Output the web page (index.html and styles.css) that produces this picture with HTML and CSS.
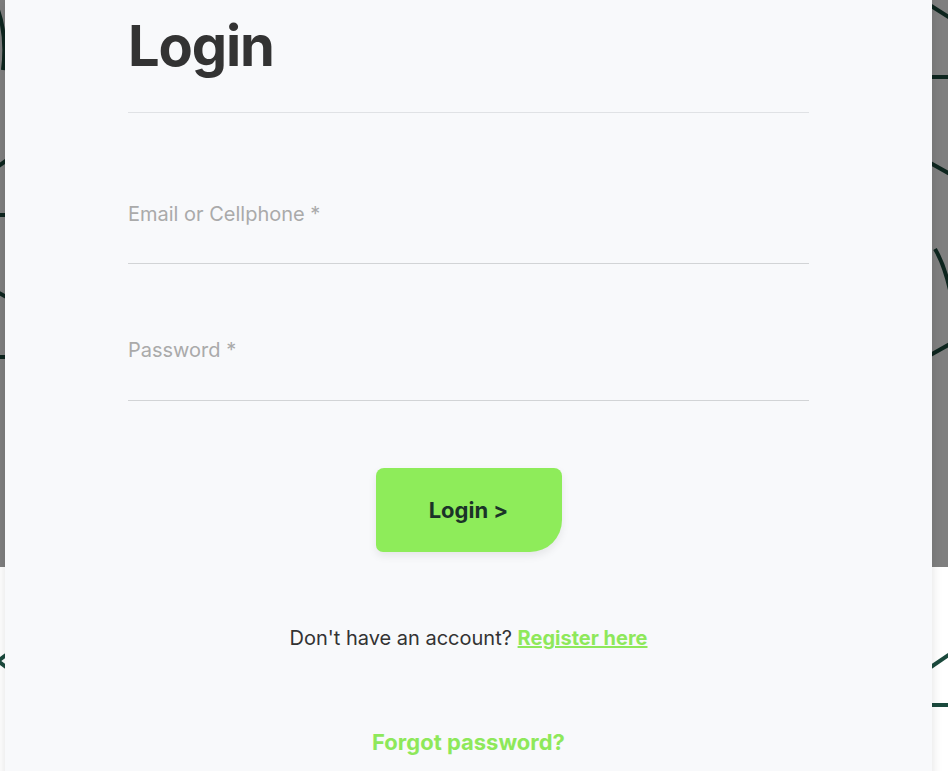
FILE: index.html
```html
<!DOCTYPE html>
<html lang="en">
<head>
    <meta charset="UTF-8">
    <meta name="viewport" content="width=device-width, initial-scale=1.0">
    <title>Login</title>
    <link rel="stylesheet" href="styles.css">
</head>
<body>
    <!-- decorative pattern behind the modal -->
    <svg class="pattern" width="948" height="771" viewBox="0 0 948 771" fill="none">
        <g stroke="#1b4a3d" stroke-width="4" stroke-linecap="butt">
            <path d="M-6 0 Q 8 30 3 70"/>
            <path d="M-10 172 L 10 158"/>
            <path d="M-10 215 L 10 215"/>
            <path d="M-10 288 L 10 299"/>
            <path d="M-10 357 L 10 357"/>
            <path d="M10 652 L -2 661 L 10 670"/>
            <path d="M925 2 L 950 18"/>
            <path d="M925 77 L 950 77"/>
            <path d="M925 160 L 950 174"/>
            <path d="M935 249 Q 944 264 950 290"/>
            <path d="M925 358 L 950 344"/>
            <path d="M925 671 L 950 654"/>
            <path d="M925 705 L 950 705"/>
        </g>
    </svg>
    <div class="overlay"></div>

    <div class="modal">
        <h1 class="title">Login</h1>

        <form class="login-form">
            <div class="field field-login">
                <label for="login">Email or Cellphone *</label>
                <input type="text" id="login" name="login">
            </div>
            <div class="field field-password">
                <label for="password">Password *</label>
                <input type="password" id="password" name="password">
            </div>
            <button type="submit" class="btn-login">Login &gt;</button>
        </form>

        <p class="register">Don't have an account? <a href="/register">Register here</a></p>
        <p class="forgot"><a href="/forgot">Forgot password?</a></p>
    </div>
</body>
</html>
```

FILE: styles.css
```css
* {
    margin: 0;
    padding: 0;
    box-sizing: border-box;
}

body {
    font-family: Inter, 'Noto Sans', sans-serif;
    background: #ffffff;
    width: 948px;
    height: 771px;
    overflow: hidden;
    position: relative;
}

.pattern {
    position: absolute;
    top: 0;
    left: 0;
}

.overlay {
    position: absolute;
    top: 0;
    left: 0;
    right: 0;
    height: 567px;
    background: rgba(0, 0, 0, 0.5);
}

.modal {
    position: absolute;
    top: 0;
    left: 5px;
    width: 927px;
    height: 840px;
    background: #f8f9fb;
    box-shadow: 0 0 10px rgba(0, 0, 0, 0.12);
    padding: 13px 123px 0;
}

.title {
    font-size: 56px;
    line-height: 1.2;
    font-weight: 700;
    color: #333333;
    letter-spacing: -0.02em;
    padding-bottom: 32px;
    border-bottom: 1px solid #e0e2e5;
}

.login-form {
    display: flex;
    flex-direction: column;
    margin-top: 13px;
}

.field label {
    display: block;
    font-size: 20px;
    line-height: 24px;
    color: #aaaaaa;
}

.field input {
    display: block;
    width: 100%;
    border: none;
    border-bottom: 1px solid #d2d4d6;
    background: transparent;
    font-family: inherit;
    font-size: 18px;
    outline: none;
}

.field-login {
    padding-top: 76px;
}

.field-login input {
    height: 38px;
}

.field-password {
    padding-top: 74px;
}

.field-password input {
    height: 39px;
}

.btn-login {
    align-self: center;
    width: 186px;
    height: 84px;
    margin-top: 67px;
    border: none;
    border-radius: 8px 8px 32px 7px;
    background: #8eec5a;
    color: #1b3328;
    font-family: inherit;
    font-size: 22px;
    font-weight: 700;
    box-shadow: 0 4px 8px rgba(0, 0, 0, 0.08);
    cursor: pointer;
}

.register {
    margin-top: 74px;
    text-align: center;
    font-size: 20px;
    line-height: 24px;
    color: #333333;
}

.register a {
    color: #8ee85a;
    font-weight: 700;
    text-decoration: underline;
}

.forgot {
    margin-top: 79px;
    text-align: center;
    font-size: 22px;
    line-height: 26px;
}

.forgot a {
    color: #8ee85a;
    font-weight: 700;
    text-decoration: none;
}
```
